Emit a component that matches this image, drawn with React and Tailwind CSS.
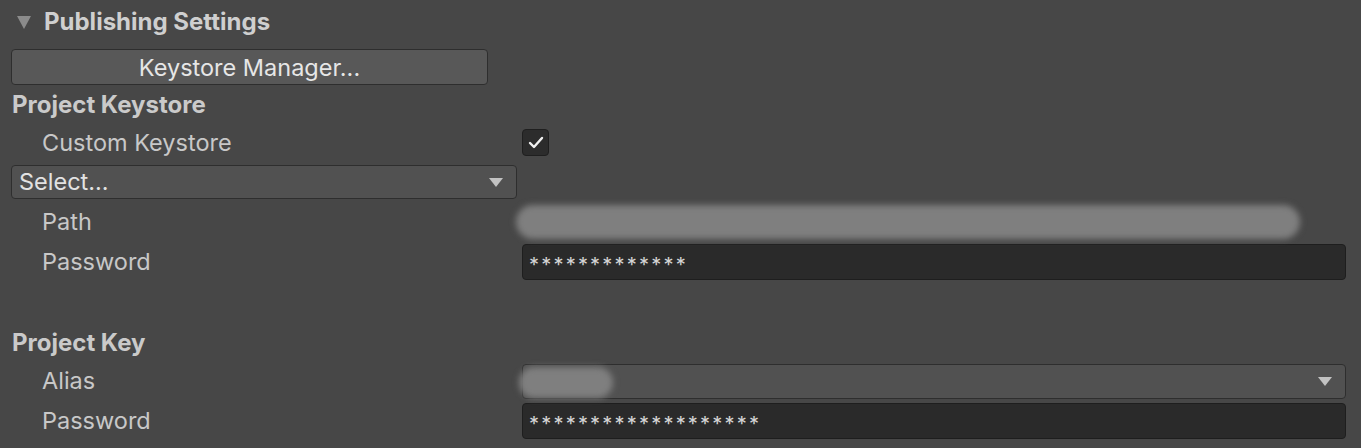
import React from "react";

const font = { fontFamily: "Inter, 'Noto Sans', sans-serif" };

function Caret({ className = "" }) {
  return (
    <svg width="14" height="9" viewBox="0 0 14 9" className={className}>
      <path d="M0 0 H14 L7 9 Z" fill="#c2c2c2" />
    </svg>
  );
}

function Row({ label, children, className = "" }) {
  return (
    <div className={`flex items-center ${className}`}>
      <div className="w-[522px] shrink-0 pl-[42px] text-[23.5px] text-[#c8c8c8]">{label}</div>
      <div className="flex-1 pr-[15px]">{children}</div>
    </div>
  );
}

function PasswordField({ value }) {
  return (
    <div className="h-[36px] rounded-[4px] border border-[#1e1e1e] bg-[#2a2a2a] pl-[6px] flex items-center text-[20px] leading-none pt-[6px] text-[#d4d4d4] tracking-[2.2px]">
      {value}
    </div>
  );
}

export default function App() {
  return (
    <div className="w-[1361px] h-[448px] bg-[#474747] overflow-hidden" style={font}>
      {/* Foldout header */}
      <div className="h-[44px] flex items-center pl-[17px]">
        <svg width="14" height="13" viewBox="0 0 14 13" className="mr-[13px]">
          <path d="M0 0 H14 L7 13 Z" fill="#8b8b8b" />
        </svg>
        <span className="text-[24px] font-bold text-[#cfcfcf]">Publishing Settings</span>
      </div>

      <div className="pl-[11px] mt-[5px]">
        <button className="w-[477px] h-[36px] rounded-[4px] border border-[#2e2e2e] bg-[#585858] text-[23.5px] text-[#e6e6e6]">
          Keystore Manager...
        </button>
      </div>

      <div className="h-[40px] flex items-center pl-[12px] text-[24px] font-bold text-[#cacaca]">
        Project Keystore
      </div>

      <Row label="Custom Keystore" className="h-[35px]">
        <div className="w-[27px] h-[27px] rounded-[4px] border border-[#1f1f1f] bg-[#2c2c2c] flex items-center justify-center">
          <svg width="16" height="13" viewBox="0 0 16 13">
            <path d="M2 7 L6 11 L14 2" fill="none" stroke="#f0f0f0" strokeWidth="2.4" strokeLinecap="round" strokeLinejoin="round" />
          </svg>
        </div>
      </Row>

      <div className="pl-[11px] mt-[5px]">
        <div className="w-[506px] h-[34px] rounded-[4px] border border-[#2e2e2e] bg-[#515151] flex items-center justify-between pl-[7px] pr-[13px] text-[23.5px] text-[#e2e2e2]">
          <span>Select...</span>
          <Caret />
        </div>
      </div>

      <Row label="Path" className="h-[40px] mt-[3px]">
        <div className="h-[34px] w-[784px] -ml-[6px] rounded-full bg-[#7f7f7f] blur-[3px]" />
      </Row>

      <Row label="Password" className="h-[40px]">
        <PasswordField value="*************" />
      </Row>

      <div className="h-[40px] mt-[41px] flex items-center pl-[12px] text-[24px] font-bold text-[#cacaca]">
        Project Key
      </div>

      <Row label="Alias" className="h-[36px]">
        <div className="relative h-[35px] rounded-[4px] border border-[#2e2e2e] bg-[#515151] flex items-center justify-end pr-[13px]">
          <div className="absolute left-[-4px] top-[2px] h-[31px] w-[94px] rounded-full bg-[#7f7f7f] blur-[3px]" />
          <Caret />
        </div>
      </Row>

      <Row label="Password" className="h-[36px] mt-[4px]">
        <PasswordField value="*******************" />
      </Row>
    </div>
  );
}
